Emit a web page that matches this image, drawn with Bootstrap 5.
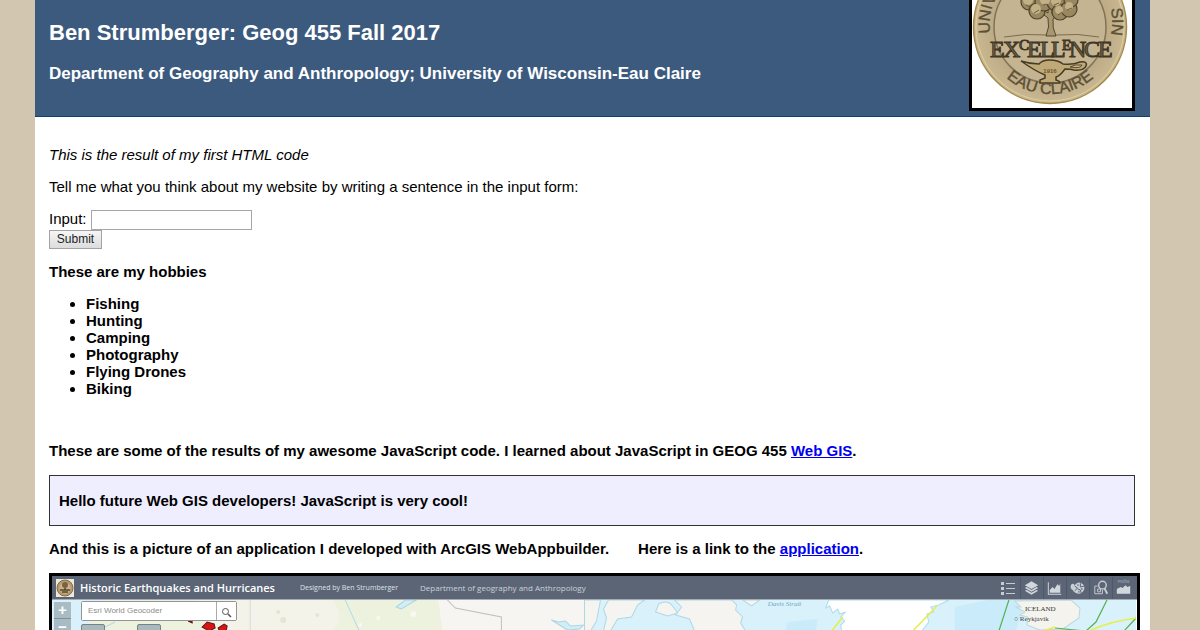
<!DOCTYPE html>
<html lang="en">
<head>
<meta charset="utf-8">
<meta name="viewport" content="width=device-width, initial-scale=1">
<title>Ben Strumberger: Geog 455 Fall 2017</title>
<link href="https://cdn.jsdelivr.net/npm/bootstrap@5.3.0/dist/css/bootstrap.min.css" rel="stylesheet">
<style>
body{background:#d3c6b0;color:#000;font:15px/17px "Liberation Sans",Arial,sans-serif}
.page{margin:0 50px 0 35px}
.masthead{background:#3c5a7e;border-bottom:1px solid #0b4272;padding:0 15px 5px 14px}
.masthead h1{font-size:22px;line-height:26px;font-weight:700;margin:20px 0 17px}
.masthead h2{font-size:17px;line-height:22px;font-weight:700;margin:0}
.seal{width:166px;border:3px solid #000;border-top:0}
.content{padding:29px 15px 0 14px}
.content p,.content form{margin:0 0 15px}
.entry{width:161px;height:20px;border:1px solid #a6a6a6;padding:1px 4px;border-radius:0}
.send{height:19px;width:53px;padding:0;border:1px solid #a3a3a3;border-radius:0;background:linear-gradient(#f6f6f6,#dcdcdc);font-size:12px;line-height:17px;color:#222}
.content form{margin-bottom:14px}
.hobbies{padding-left:37px;margin:0 0 45px}
.content p.lead-in{margin-bottom:16px}
a.link{color:#00e;text-decoration:underline}
.hello{background:#eef;border:1px solid #333;padding:16px 9px;margin-bottom:14px}
.application{margin-left:29px}
.webmap{border:3px solid #000;border-bottom:0;margin:0 -5px 0 0}
.mapbar{background:#5b6576;height:23px;padding:0 2px 0 4px;color:#fff;font-family:"Open Sans",sans-serif;font-size:11px;line-height:22px}
.mapbar .title{font-weight:600;width:186px;margin:0 34px 0 6px}
.mapbar .credit{font-size:7px;color:#dde1e7;width:95px}
.mapbar .dept{font-size:8px;color:#cbd1d9;margin-left:25px}
.maptools svg{width:23px;height:22px;border-left:1px solid #4c586b}
.mapview{height:31px;border-top:1px solid #a4abb2}
.mapview .terrain{height:31px}
.zoomer{left:2px;top:2px;width:17px}
.zoomer button{height:17px;border:0;border-bottom:1px solid #7d919b;padding:0;background:#a9bcc4;color:#fff;font:700 15px/16px "Liberation Sans",Arial,sans-serif}
.finder{left:29px;top:1px;width:156px;height:20px;border:1px solid #949494;border-radius:2px;background:#fff}
.finder input{min-width:0;border:0;padding:0 6px;font-family:"Liberation Sans",Arial,sans-serif;font-size:8px;line-height:18px}
.finder input::placeholder{color:#8b8b8b;opacity:1}
.finder button{width:20px;border:0;border-left:1px solid #aaa;padding:0;background:#fff;line-height:1}
.chips{left:29px;top:24px;gap:32px}
.chips span{width:24px;height:7px;border:1px solid #74838a;border-radius:2px 2px 0 0;background:#a9b9be}
</style>
</head>
<body>
<div class="page bg-white">
  <header class="masthead d-flex justify-content-between align-items-start text-white">
    <div>
      <h1>Ben Strumberger: Geog 455 Fall 2017</h1>
      <h2>Department of Geography and Anthropology; University of Wisconsin-Eau Claire</h2>
    </div>
    <svg class="seal bg-white flex-shrink-0" viewBox="0 0 160 108" height="111" role="img" aria-label="University seal">
      <defs>
        <radialGradient id="metal"><stop offset="0" stop-color="#c9b896"/><stop offset=".7" stop-color="#bba985"/><stop offset="1" stop-color="#c9b890"/></radialGradient>
        <path id="lower" d="M11 27A67 67 0 0 0 145 27"/>
        <path id="left" d="M21 44A60 60 0 0 1 30 -12"/>
        <path id="right" d="M130 -12A60 60 0 0 1 135 46"/>
      </defs>
      <circle cx="78" cy="27" r="76.500" fill="url(#metal)" stroke="#a58a4b" stroke-width="1.500"/>
      <circle cx="78" cy="27" r="74" fill="none" stroke="#dfd0a2"/>
      <circle cx="78" cy="27" r="56" fill="#c4b492" stroke="#837354" stroke-width="1.500"/>
      <path d="M32 37q22-4 43-2h9q22-2 43 2" fill="none" stroke="#7d6c4d"/>
      <path d="M74 36q4-9 2-18l-12-9 2-2 10 6V2h4v12l11-7 2 2-12 10q-1 9 3 17z" fill="#a9966d" stroke="#514832"/>
      <g fill="#98875f" stroke="#4d432e" stroke-width="1.200">
        <circle cx="57" cy="2" r="8"/><circle cx="65" cy="11" r="8"/><circle cx="72" cy="2" r="9"/><circle cx="84" cy="2" r="9"/><circle cx="88" cy="12" r="8"/><circle cx="97" cy="9" r="8"/><circle cx="99" cy="0" r="7"/>
      </g>
      <g fill="#c2b087"><circle cx="56" cy="0" r="5"/><circle cx="64" cy="9" r="5"/><circle cx="73" cy="0" r="5"/><circle cx="84" cy="1" r="5"/><circle cx="87" cy="10" r="4"/><circle cx="97" cy="6" r="4"/></g>
      <path d="M54 5l4 2M62 13l5-3M71 5l4-1M82 5l5-2M86 15l4-3M95 10l5-2" stroke="#6c5d40"/>
      <text x="18 31 47 55 68 79 90 97 112 126" y="57" font-family="Liberation Serif,serif" font-size="24" fill="#6f6145" stroke="#3e3524" stroke-width="1">EX<tspan dy="-7" font-size="15">C</tspan><tspan dy="7">ELL</tspan><tspan dy="-7" font-size="15">E</tspan><tspan dy="7">NCE</tspan></text>
      <path d="M49 61q9 3 18 3 3-4 11-4t13 4q10 1 17-2 8-1 6 4t-12 4q-3-1-9-1-5 7-9 8v3q4 1 4 3H68v-3l5-2v-3q-10-4-24-14z" fill="#bfa977" stroke="#493c25" stroke-width="1.500"/>
      <path d="M98 67q11 2 12-2-7-1-12 2" fill="#c4b492" stroke="#5d4b2b"/>
      <text x="78" y="73" font-family="Liberation Sans,sans-serif" font-size="6" font-weight="700" text-anchor="middle" fill="#6b5735">1916</text>
      <g font-family="Liberation Sans,Arial,sans-serif" font-size="16" fill="#5c5037" stroke="#5c5037" stroke-width=".4">
        <text text-anchor="middle"><textPath href="#lower" startOffset="50%">EAU CLAIRE</textPath></text>
        <text><textPath href="#left" startOffset="11">UNIV</textPath></text>
        <text text-anchor="end"><textPath href="#right" startOffset="49">SIN</textPath></text>
      </g>
    </svg>
  </header>
  <main class="content">
    <p><em>This is the result of my first HTML code</em></p>
    <p>Tell me what you think about my website by writing a sentence in the input form:</p>
    <form>
      <div class="d-flex align-items-start"><label for="remark" class="me-1">Input:</label><input id="remark" class="entry" type="text"></div>
      <button class="send d-block" type="button">Submit</button>
    </form>
    <p class="fw-bold">These are my hobbies</p>
    <ul class="hobbies fw-bold">
      <li>Fishing</li><li>Hunting</li><li>Camping</li><li>Photography</li><li>Flying Drones</li><li>Biking</li>
    </ul>
    <p class="lead-in fw-bold">These are some of the results of my awesome JavaScript code. I learned about JavaScript in GEOG 455 <a class="link" href="#">Web GIS</a>.</p>
    <div class="hello fw-bold">Hello future Web GIS developers! JavaScript is very cool!</div>
    <p class="lead-in fw-bold">And this is a picture of an application I developed with ArcGIS WebAppbuilder.<span class="application">Here is a link to the <a class="link" href="#">application</a>.</span></p>
    <section class="webmap" aria-label="Historic Earthquakes and Hurricanes">
      <div class="mapbar d-flex align-items-center text-nowrap">
        <svg width="18" height="18" viewBox="0 0 18 18"><path fill="#eee9df" d="M0 0h18v18H0z"/><circle cx="9" cy="9" r="8" fill="#b59b70" stroke="#846b43"/><circle cx="9" cy="9" r="5.500" fill="#cbb58d"/><path d="M9 11V6M4 11h10M6 13h6" stroke="#57452b" stroke-width="1.500"/><circle cx="9" cy="6" r="3" fill="#796342"/></svg>
        <span class="title">Historic Earthquakes and Hurricanes</span>
        <span class="credit">Designed by Ben Strumberger</span>
        <span class="dept">Department of geography and Anthropology</span>
        <div class="maptools d-flex ms-auto">
          <svg class="border-0" viewBox="0 0 23 22" fill="#c6ccd4"><path d="M4 5h3v3H4zM4 10h3v3H4zM4 15h3v3H4zM9 6h9v1H9zM9 11h9v1H9zM9 16h9v1H9z"/></svg>
          <svg viewBox="0 0 23 22" fill="#d2d7dd"><path d="m11 4 7 4-7 4-7-4zM4 11l2-1 5 3 5-3 2 1-7 4zM4 14l2-1 5 3 5-3 2 1-7 4z"/></svg>
          <svg viewBox="0 0 23 22" fill="#d2d7dd"><path d="M4 5h1v12h13v1H4zM6 16v-3l3-3 2 2 3-5 2 2 1-3v10z"/></svg>
          <svg viewBox="0 0 23 22"><path fill="#c9cfd6" d="M4 8q2-3 4 0 3-4 7-2 4 2 3 6-1 4-5 5-5 0-7-4-3-1-2-5z"/><path d="M8 9l3 2-3 3M14 6v4l4-1M11 12l3 1 1 4" stroke="#5b6576" fill="none"/><path d="M11 8h1M15 12h1M12 15h1" stroke="#5b6576" stroke-width="2"/></svg>
          <svg viewBox="0 0 23 22" fill="none" stroke="#c6ccd4"><circle cx="13" cy="8" r="4" stroke-width="1.500"/><path d="m15 11 3 6" stroke-width="2"/><path d="M8 9H5v8h8v-4M8 12h3v3H8z"/></svg>
          <svg viewBox="0 0 23 22" fill="#d2d7dd"><path d="M4 17v-5l4-2 2 1 3-3 2 2 3-1v8z"/><text x="5" y="6" font-family="Inter,sans-serif" font-size="4" fill="#aeb6c1">Profile</text></svg>
        </div>
      </div>
      <div class="mapview position-relative overflow-hidden">
        <svg class="terrain d-block w-100" viewBox="0 0 1084 31" preserveAspectRatio="xMinYMin slice">
          <path fill="#d8f1fb" d="M0 0h1084v31H0z"/>
          <path fill="#edf2df" d="M52 0h160l90 31H30q12-14 22-31"/>
          <path fill="#f3f3e9" d="M145 0h150v31H165z"/>
          <path fill="#ecf2de" d="M280 0q14 16 1 31h112q8-17-6-31z"/>
          <path fill="#f6f5f2" d="M386 0h163q-7 8-5 14t-11 17H390z"/>
          <path fill="#d0edf8" stroke="#acd5e2" d="M344 7l9-7h11l-15 9zM499 20l7 2 7-1 5 5 13-1-4 4-12 1z"/>
          <path fill="none" stroke="#b8dbe1" d="m293 0 14 31M63 22l-18 9"/>
          <path fill="none" stroke="#bfc0bd" d="M395 0l8 8 46 9v14"/>
          <path fill="none" stroke="#ded4e2" d="M198 0v31"/>
          <path fill="#f6f4f0" stroke="#add9e5" d="M548 0h-16v31h6l6-10zM556 0h36l-7 5-6 12-14 2-7 12h-7l3-13-3-9zM606 4q9-5 14 2l5 7-10 3-12-4zM622 0h57l5 5-1 5 7 7-2 6 5 8h-51l-5-12-14-4 6-8zM690 0h17l-8 6z"/>
          <path fill="#caebf9" d="M735 22l30-3-2 12h-30zM902 7l33-7h37l-9 31h-61z"/>
          <path fill="#fff" stroke="#afddeb" d="M776 0h120l-10 5-8 2 3 5-7 2 2 8-7 9h-80l-1-6 4-4-4-4 5-5-6 2-2-5-5 4-3-7-4 2z"/>
          <path d="M790 17l-11 14M884 6l-24 25" stroke="#e5f042" stroke-width="1.500"/>
          <path fill="#f5f3ed" stroke="#bad9df" d="m962 1 6 6h-5l9 5-5 3 8 2-1 8 13 5 23-1 16-11 1-10-9-8z"/>
          <path fill="none" stroke="#51b451" stroke-width="1.200" d="m956 0-10 31M1054 0l-11 22-10 9M1002 28l30 3M1084 17l-13 14"/>
          <path fill="none" stroke="#e5f042" stroke-width="1.500" d="m990 31 12-4M1036 31q22-10 48-13"/>
          <g fill="#e2e6d7"><circle cx="226" cy="12" r="2"/><circle cx="231" cy="20" r="3"/><circle cx="265" cy="15" r="2"/></g>
          <g fill="#f7f8ef"><circle cx="326" cy="18" r="2"/><circle cx="361" cy="14" r="3"/><circle cx="308" cy="25" r="2"/></g>
          <path fill="#d81414" stroke="#621717" d="m150 27 5-5 7 2 1 4-6 3zM166 28l6-4 3 2-1 5h-7zM136 21h4v2z"/>
          <g font-family="Liberation Serif,serif">
            <text x="113" y="5" font-size="6" fill="#626b62">STATES</text>
            <text x="715" y="6" font-size="7" font-style="italic" fill="#6eaac4">Davis Strait</text>
            <text x="972" y="11" font-size="7" fill="#333">ICELAND</text>
            <text x="961" y="21" font-size="7" fill="#444">○ Reykjavik</text>
          </g>
          <path fill="#fff" d="M1083 0h1v31h-1z"/>
        </svg>
        <div class="zoomer position-absolute d-grid"><button type="button" aria-label="Zoom in">+</button><button type="button" aria-label="Zoom out">−</button></div>
        <div class="finder position-absolute d-flex">
          <input class="flex-grow-1" type="text" placeholder="Esri World Geocoder" aria-label="Esri World Geocoder">
          <button type="button" aria-label="Search"><svg width="11" height="11" viewBox="0 0 11 11" fill="none" stroke="#555"><circle cx="4.500" cy="4.500" r="3"/><path d="m7 7 3 3" stroke-width="1.500"/></svg></button>
        </div>
        <div class="chips position-absolute d-flex"><span></span><span></span></div>
      </div>
    </section>
  </main>
</div>
<script src="https://cdn.jsdelivr.net/npm/bootstrap@5.3.0/dist/js/bootstrap.bundle.min.js"></script>
</body>
</html>
